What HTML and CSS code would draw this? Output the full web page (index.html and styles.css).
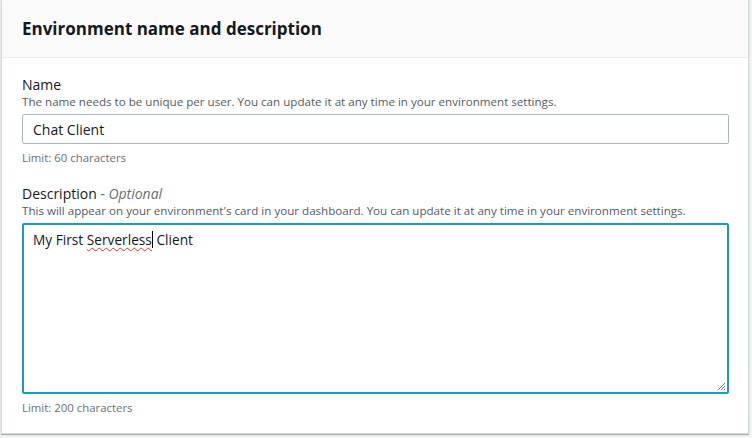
FILE: index.html
```html
<!DOCTYPE html>
<html lang="en">
<head>
<meta charset="utf-8">
<link rel="stylesheet" href="styles.css">
</head>
<body>
<div class="page">
  <section class="card">
    <header class="card-header">
      <h2 class="card-title">Environment name and description</h2>
    </header>
    <div class="card-body">
      <div class="field">
        <label class="field-label" for="name">Name</label>
        <div class="field-help">The name needs to be unique per user. You can update it at any time in your environment settings.</div>
        <input id="name" class="text-input" type="text" value="Chat Client" spellcheck="false">
        <div class="field-limit">Limit: 60 characters</div>
      </div>
      <div class="field">
        <label class="field-label" for="desc">Description <span class="optional">- Optional</span></label>
        <div class="field-help field-help-tight">This will appear on your environment's card in your dashboard. You can update it at any time in your environment settings.</div>
        <div class="textarea">
          <div class="textarea-text">My First <span class="misspelled">Serverless</span><span class="caret"></span> Client</div>
          <svg class="resize" width="9" height="9" viewBox="0 0 9 9"><path d="M8 1 L1 8 M8 4 L4 8 M8 7 L7 8" stroke="#777" stroke-width="1" fill="none"/></svg>
        </div>
        <div class="field-limit">Limit: 200 characters</div>
      </div>
    </div>
  </section>
</div>
</body>
</html>
```
FILE: styles.css
```css
html, body {
  margin: 0;
  padding: 0;
  background: #f2f3f3;
  font-family: "Open Sans", "Liberation Sans", sans-serif;
  color: #16191f;
}
.page {
  padding: 0 3px 4px 1px;
  height: 438px;
  box-sizing: border-box;
}
.card {
  background: #fff;
  border: 1px solid #d5dbdb;
  border-top: none;
  box-shadow: 0 1px 1px 0 rgba(0, 28, 36, 0.3);
  height: 434px;
  box-sizing: border-box;
}
.card-header {
  background: #fafafa;
  border-bottom: 1px solid #eaeded;
  height: 58px;
  box-sizing: border-box;
  padding: 18px 20px 0 20px;
}
.card-title {
  margin: 0;
  font-size: 17px;
  font-weight: 700;
  line-height: 22px;
  color: #16191f;
}
.card-body {
  padding: 18px 19px 0 20px;
}
.field {
  margin-bottom: 19px;
}
.field-label {
  display: block;
  font-size: 14px;
  line-height: 18px;
  color: #16191f;
}
.optional {
  font-style: italic;
  color: #687078;
}
.field-help {
  font-size: 11.6px;
  line-height: 16px;
  color: #545b64;
  margin-bottom: 4px;
}
.field-help-tight {
  margin-bottom: 4px;
}
.text-input {
  display: block;
  width: 100%;
  box-sizing: border-box;
  height: 30px;
  border: 1px solid #aab7b8;
  border-radius: 2px;
  padding: 0 10px;
  font-family: inherit;
  font-size: 14px;
  color: #16191f;
  outline: none;
}
.field-limit {
  font-size: 11.4px;
  line-height: 16px;
  color: #687078;
  margin-top: 6px;
}
.textarea {
  position: relative;
  height: 171px;
  border: 2px solid #1a9bc7;
  border-radius: 2px;
  box-sizing: border-box;
  padding: 5px 9px;
}
.textarea-text {
  font-size: 13.7px;
  line-height: 20px;
  color: #16191f;
}
.misspelled {
  text-decoration: underline wavy #e0312b;
  text-decoration-thickness: 1px;
  text-underline-offset: 2px;
}
.caret {
  display: inline-block;
  width: 1px;
  height: 17px;
  background: #000;
  vertical-align: -3px;
}
.resize {
  position: absolute;
  right: 1px;
  bottom: 1px;
}
```
